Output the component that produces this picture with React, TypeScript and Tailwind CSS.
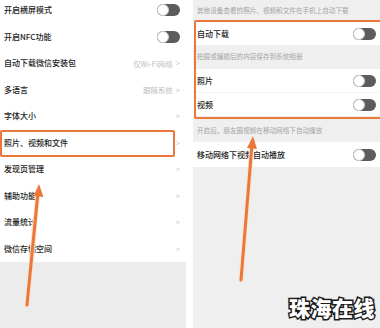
const leftRows = [
	{ title: '开启横屏模式', kind: 'toggle' },
	{ title: '开启NFC功能', kind: 'toggle' },
	{ title: '自动下载微信安装包', kind: 'link', value: '仅Wi-Fi网络' },
	{ title: '多语言', kind: 'link', value: '跟随系统' },
	{ title: '字体大小', kind: 'link' },
	{ title: '照片、视频和文件', kind: 'link' },
	{ title: '发现页管理', kind: 'link' },
	{ title: '辅助功能', kind: 'link' },
	{ title: '流量统计', kind: 'link' },
	{ title: '微信存储空间', kind: 'link' },
]

function Toggle() {
	return (
		<div className="flex h-[12px] w-[23px] items-center rounded-full bg-[#5c5c5c]">
			<div className="h-[12px] w-[12px] rounded-full border border-[#cfcfcf] bg-white" />
		</div>
	)
}

function Chevron() {
	return <span className="text-[8px] leading-none text-[#c4c4c4]">&gt;</span>
}

function RightRow({ title }: { title: string }) {
	return (
		<div className="flex h-[23px] items-center justify-between bg-white pl-[4px] pr-[4px]">
			<span className="text-[8px] font-medium text-[#1c1c1c]">{title}</span>
			<Toggle />
		</div>
	)
}

function Caption({ text, className }: { text: string; className?: string }) {
	return (
		<div className={`flex items-center pl-[4px] text-[6.6px] text-[#a5a5a5] ${className ?? ''}`}>
			{text}
		</div>
	)
}

export default function App() {
	return (
		<div
			className="relative flex h-[328px] w-[380px] overflow-hidden bg-white"
			style={{ fontFamily: '"Noto Sans CJK SC", "Noto Sans", sans-serif' }}
		>
			{/* left settings list */}
			<div className="flex w-[186px] flex-col bg-[#ececec]">
				<div className="-mt-[3px] bg-white">
					{leftRows.map((row) => (
						<div
							key={row.title}
							className="flex h-[26.5px] items-center justify-between pl-[4px] pr-[6px]"
						>
							<span className="text-[8px] font-medium text-[#1c1c1c]">{row.title}</span>
							{row.kind === 'toggle' ? (
								<Toggle />
							) : (
								<div className="flex items-center gap-[3px]">
									{row.value && (
										<span className="text-[7.4px] text-[#bdbdbd]">{row.value}</span>
									)}
									<Chevron />
								</div>
							)}
						</div>
					))}
				</div>
			</div>

			{/* right settings detail */}
			<div className="ml-[7px] flex flex-1 flex-col bg-[#efefef]">
				<Caption text="其他设备查看的照片、视频和文件在手机上自动下载" className="h-[22px]" />
				<RightRow title="自动下载" />
				<Caption text="拍摄或编辑后的内容保存到系统相册" className="h-[24px]" />
				<RightRow title="照片" />
				<div className="h-px bg-[#f3f3f3]" />
				<RightRow title="视频" />
				<Caption text="开启后，朋友圈视频在移动网络下自动播放" className="mt-[3px] h-[23px]" />
				<div className="flex h-[25px] items-center justify-between bg-white pl-[4px] pr-[4px]">
					<span className="text-[8px] font-medium text-[#1c1c1c]">移动网络下视频自动播放</span>
					<Toggle />
				</div>
			</div>

			{/* annotations */}
			<div className="absolute left-0 top-[130px] h-[27px] w-[175px] rounded-[2px] border-[2.5px] border-[#e9783a]" />
			<div className="absolute left-[194px] top-[20px] h-[99px] w-[190px] rounded-[2px] border-[2.5px] border-[#e9783a]" />

			<svg className="pointer-events-none absolute left-0 top-0" width="380" height="328">
				<g stroke="#fbe2cf" strokeWidth="5" fill="none" strokeLinecap="round">
					<line x1="27" y1="305" x2="38" y2="192" />
					<line x1="241" y1="280" x2="252" y2="144" />
				</g>
				<g stroke="#e9783a" strokeWidth="3" fill="none" strokeLinecap="round">
					<line x1="27" y1="305" x2="38" y2="192" />
					<line x1="241" y1="280" x2="252" y2="144" />
				</g>
				<polygon points="39,184 33.5,196 43.5,197" fill="#e9783a" />
				<polygon points="253,136 247,148 257,149" fill="#e9783a" />
			</svg>

			<div
				className="absolute left-[289px] top-[297px] text-[21px] font-black leading-none tracking-[0.5px] text-white [-webkit-text-stroke:3px_#1a1a1a] [paint-order:stroke_fill]"
				style={{ fontFamily: '"Noto Sans CJK SC", sans-serif' }}
			>
				珠海在线
			</div>
		</div>
	)
}
